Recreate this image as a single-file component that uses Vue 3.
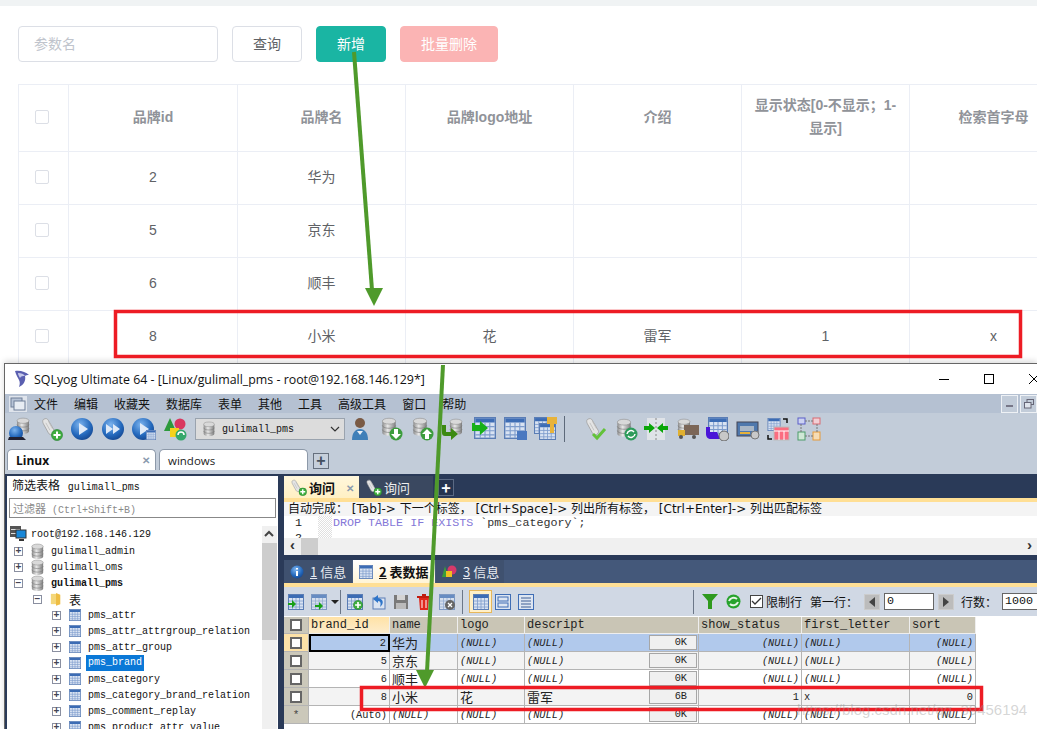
<script setup>
const webCols = ['品牌logo地址', '介绍']
const webRows = [
    { id: 2, name: '华为', logo: '', desc: '', show: '', letter: '' },
    { id: 5, name: '京东', logo: '', desc: '', show: '', letter: '' },
    { id: 6, name: '顺丰', logo: '', desc: '', show: '', letter: '' },
    { id: 8, name: '小米', logo: '花', desc: '雷军', show: '1', letter: 'x' },
]
const menus = ['文件', '编辑', '收藏夹', '数据库', '表单', '其他', '工具', '高级工具', '窗口', '帮助']
const tables = [
    'pms_attr',
    'pms_attr_attrgroup_relation',
    'pms_attr_group',
    'pms_brand',
    'pms_category',
    'pms_category_brand_relation',
    'pms_comment_replay',
    'pms_product_attr_value',
]
const gridHead = ['brand_id', 'name', 'logo', 'descript', 'show_status', 'first_letter', 'sort']
const gridRows = [
    { id: '2', name: '华为', size: '0K', cls: 'selected' },
    { id: '5', name: '京东', size: '0K', cls: 'alt' },
    { id: '6', name: '顺丰', size: '0K', cls: '' },
    { id: '8', name: '小米', logo: '花', desc: '雷军', size: '6B', show: '1', letter: 'x', sort: '0', cls: 'alt' },
    { id: '(Auto)', size: '0K', cls: 'new' },
]
</script>

<template>
    <div class="screen">
        <!-- shared icon parts -->
        <svg class="defs" width="0" height="0" aria-hidden="true">
            <defs>
                <linearGradient id="dbg" x1="0" x2="1" y1="0" y2="0">
                    <stop offset="0" stop-color="#8d8d8d" />
                    <stop offset="0.4" stop-color="#e8e8e8" />
                    <stop offset="1" stop-color="#7c7c7c" />
                </linearGradient>
                <radialGradient id="blueg" cx="0.4" cy="0.3" r="0.8">
                    <stop offset="0" stop-color="#7db4ee" />
                    <stop offset="0.6" stop-color="#2469bd" />
                    <stop offset="1" stop-color="#123f86" />
                </radialGradient>
                <symbol id="db" viewBox="0 0 24 24">
                    <path d="M4 5v14c0 2 3.600 3.500 8 3.500s8-1.500 8-3.500V5z" fill="url(#dbg)" />
                    <ellipse cx="12" cy="5" rx="8" ry="3.500" fill="#d9d9d9" stroke="#8b8b8b" stroke-width=".7" />
                    <path d="M4 10c0 2 3.600 3.500 8 3.500s8-1.500 8-3.500M4 15c0 2 3.600 3.500 8 3.500s8-1.500 8-3.500" fill="none" stroke="#777" stroke-width=".8" />
                </symbol>
                <symbol id="tbl" viewBox="0 0 16 16">
                    <rect x=".5" y=".5" width="15" height="15" fill="#d9e3f2" stroke="#5a7db5" />
                    <rect x="1" y="1" width="14" height="3" fill="#3c6cb4" />
                    <path d="M1 7h14M1 10h14M1 13h14M4.500 4v11M8 4v11M11.500 4v11" stroke="#7d9ccc" stroke-width=".8" />
                </symbol>
                <symbol id="scroll" viewBox="0 0 24 24">
                    <path d="M4 3c3-2 5-1 6 1l7 12c1 2 0 4-2 5-2 1-4 0-5-2L4 8C3 6 3 4 4 3z" fill="#e4e4e4" stroke="#a0a0a0" />
                    <path d="M7 7l5 9M10 5l5 9" stroke="#bdbdbd" />
                </symbol>
                <symbol id="badge-plus" viewBox="0 0 12 12">
                    <circle cx="6" cy="6" r="5.500" fill="#3fae3f" stroke="#1f7a2a" stroke-width=".6" />
                    <path d="M6 2.500v7M2.500 6h7" stroke="#fff" stroke-width="2" />
                </symbol>
            </defs>
        </svg>

        <!-- admin page behind the window -->
        <section class="web">
            <div class="search-bar">
                <div class="web-input">参数名</div>
                <button class="web-btn query">查询</button>
                <button class="web-btn add">新增</button>
                <button class="web-btn del">批量删除</button>
            </div>
            <div class="web-table">
                <div class="web-tr head">
                    <div class="web-td"><span class="web-check"></span></div>
                    <div class="web-td">品牌id</div>
                    <div class="web-td">品牌名</div>
                    <div v-for="c in webCols" :key="c" class="web-td">{{ c }}</div>
                    <div class="web-td">显示状态[0-不显示；1-显示]</div>
                    <div class="web-td">检索首字母</div>
                </div>
                <div v-for="r in webRows" :key="r.id" class="web-tr">
                    <div class="web-td"><span class="web-check"></span></div>
                    <div class="web-td">{{ r.id }}</div>
                    <div class="web-td">{{ r.name }}</div>
                    <div class="web-td">{{ r.logo }}</div>
                    <div class="web-td">{{ r.desc }}</div>
                    <div class="web-td">{{ r.show }}</div>
                    <div class="web-td">{{ r.letter }}</div>
                </div>
            </div>
        </section>

        <!-- SQLyog window -->
        <section class="win">
            <header class="titlebar">
                <svg class="app-logo" width="16" height="18" viewBox="0 0 16 18">
                    <path d="M1 1c5-1 11 1 14 4-2 0-3 0-4 1 1 4-1 9-6 11 1-3 1-5 0-7C4 8 2 5 1 1z" fill="#5a5fb0" />
                    <path d="M4 3c3 0 6 1 7 3-2 0-4 0-5 2C5 6 4 5 4 3z" fill="#c6c9ea" />
                </svg>
                <span class="title-text">SQLyog Ultimate 64 - [Linux/gulimall_pms - root@192.168.146.129*]</span>
                <div class="win-controls">
                    <svg width="10" height="10" viewBox="0 0 10 10"><path d="M0 5.500h10" stroke="#000" /></svg>
                    <svg width="10" height="10" viewBox="0 0 10 10"><rect x=".5" y=".5" width="9" height="9" fill="none" stroke="#000" /></svg>
                    <svg width="10" height="10" viewBox="0 0 10 10"><path d="M0 0l10 10M10 0L0 10" stroke="#000" /></svg>
                </div>
            </header>

            <nav class="menubar">
                <svg class="mdi-icon" width="18" height="16" viewBox="0 0 18 16">
                    <rect x="0" y="0" width="18" height="16" fill="#dfe4ec" />
                    <rect x="2" y="2" width="11" height="9" fill="#b6c3d6" stroke="#6f7f98" />
                    <rect x="5" y="5" width="11" height="9" fill="#e7ecf3" stroke="#6f7f98" />
                </svg>
                <span v-for="m in menus" :key="m" class="menu-item">{{ m }}</span>
                <div class="mdi-btns">
                    <span class="mdi-btn"><i class="mdi-min"></i></span>
                    <span class="mdi-btn"><svg width="10" height="10" viewBox="0 0 10 10"><rect x="3" y=".5" width="6.500" height="5" fill="none" stroke="#667" /><rect x=".5" y="3.500" width="6.500" height="5.500" fill="#dfe4ec" stroke="#667" /></svg></span>
                </div>
            </nav>

            <div class="toolbar">
                <svg class="tool" viewBox="0 0 24 24"><use href="#db" x="6" y="0" width="18" height="18" /><circle cx="8" cy="16" r="7" fill="url(#blueg)" /><path d="M1 20h14l3 3H0z" fill="#223" /></svg>
                <svg class="tool" viewBox="0 0 24 24"><use href="#scroll" x="1" y="0" width="20" height="20" /><use href="#badge-plus" x="12" y="12" width="12" height="12" /></svg>
                <svg class="tool" viewBox="0 0 24 24"><circle cx="12" cy="12" r="11" fill="url(#blueg)" /><path d="M9 6l9 6-9 6z" fill="#dfeaf8" /></svg>
                <svg class="tool" viewBox="0 0 24 24"><circle cx="12" cy="12" r="11" fill="url(#blueg)" /><path d="M5 7l7 5-7 5zM12 7l7 5-7 5z" fill="#dfeaf8" /></svg>
                <svg class="tool" viewBox="0 0 24 24"><circle cx="11" cy="12" r="11" fill="url(#blueg)" /><path d="M8 6l9 6-9 6z" fill="#dfeaf8" /><use href="#tbl" x="14" y="13" width="10" height="10" /></svg>
                <svg class="tool" viewBox="0 0 24 24"><path d="M7 1l6 13H1z" fill="#2d9a3c" /><circle cx="17" cy="7" r="5.500" fill="#d9385f" /><rect x="7" y="11" width="9" height="9" fill="#f5d21c" /><circle cx="18" cy="18" r="5.500" fill="#35a86b" /><path d="M15 18a3 3 0 0 1 6 0" fill="none" stroke="#fff" stroke-width="1.500" /></svg>

                <div class="db-select">
                    <svg width="16" height="18" viewBox="0 0 24 24"><use href="#db" /></svg>
                    <span>gulimall_pms</span>
                    <svg class="db-caret" width="10" height="6" viewBox="0 0 10 6"><path d="M1 1l4 4 4-4" fill="none" stroke="#333" stroke-width="1.200" /></svg>
                </div>

                <svg class="tool" viewBox="0 0 24 24"><circle cx="12" cy="6" r="5" fill="#7a5a44" /><path d="M4 23c0-7 3-11 8-11s8 4 8 11z" fill="#3f7fb8" /><path d="M9 14l3 4 3-4" fill="#e8eef5" /></svg>
                <svg class="tool" viewBox="0 0 24 24"><use href="#db" x="0" y="0" width="20" height="20" /><circle cx="17" cy="17" r="6.500" fill="#3c9c3c" /><path d="M15 12h4v5h3l-5 5-5-5h3z" fill="#fff" /></svg>
                <svg class="tool" viewBox="0 0 24 24"><use href="#db" x="0" y="0" width="20" height="20" /><circle cx="17" cy="17" r="6.500" fill="#3c9c3c" /><path d="M15 22h4v-5h3l-5-5-5 5h3z" fill="#fff" /></svg>
                <svg class="tool" viewBox="0 0 24 24"><use href="#db" x="6" y="0" width="18" height="20" /><path d="M1 8v8c0 2 1 3 3 3h6v4l7-6-7-6v4H5V8z" fill="#3d8a12" /></svg>
                <svg class="tool" viewBox="0 0 24 24"><use href="#tbl" x="2" y="0" width="22" height="22" /><path d="M0 6v8h8v4l8-7-8-7v4H3V6z" fill="#18b018" /></svg>
                <svg class="tool" viewBox="0 0 24 24"><use href="#tbl" x="1" y="0" width="22" height="22" /><rect x="14" y="14" width="10" height="9" fill="#4a78c0" /></svg>
                <svg class="tool" viewBox="0 0 24 24"><use href="#tbl" x="0" y="0" width="17" height="17" /><use href="#tbl" x="5" y="6" width="17" height="17" /><path d="M13 0h10v7h-3v9h-4V7h-3z" fill="#e8b33a" /></svg>
                <i class="tool-sep"></i>
                <svg class="tool tool-b" viewBox="0 0 24 24"><use href="#scroll" x="1" y="0" width="20" height="20" /><path d="M10 17l4 4 8-9" fill="none" stroke="#63c23a" stroke-width="3" /></svg>
                <svg class="tool tool-b" viewBox="0 0 24 24"><use href="#db" x="0" y="1" width="20" height="20" /><circle cx="17" cy="17" r="6.500" fill="#2e9c5c" /><path d="M13 17a4 4 0 0 1 7-2M21 17a4 4 0 0 1-7 2" fill="none" stroke="#fff" stroke-width="1.500" /></svg>
                <svg class="tool tool-b" viewBox="0 0 24 24"><rect x="3" y="1" width="18" height="22" fill="#dfe3e8" /><path d="M12 1v22" stroke="#888" stroke-dasharray="2 2" /><path d="M0 9h5V6l6 5-6 5v-3H0zM24 9h-5V6l-6 5 6 5v-3h5z" fill="#09a609" /></svg>
                <svg class="tool tool-b" viewBox="0 0 24 24"><use href="#db" x="0" y="0" width="18" height="20" /><rect x="9" y="8" width="15" height="10" fill="#7b6658" /><rect x="3" y="13" width="7" height="6" fill="#e0b030" /><circle cx="6" cy="20" r="2" fill="#555" /><circle cx="19" cy="20" r="2" fill="#555" /></svg>
                <svg class="tool tool-b" viewBox="0 0 24 24"><use href="#tbl" x="2" y="0" width="22" height="20" /><path d="M1 10v7c0 3 2 5 5 5h9l-3-7H5v-5z" fill="#4a16d8" /><circle cx="19" cy="19" r="5" fill="#c8c8c8" stroke="#666" /></svg>
                <svg class="tool tool-b" viewBox="0 0 24 24"><rect x="1" y="5" width="21" height="14" fill="#4f78ad" stroke="#445" /><rect x="4" y="9" width="14" height="5" fill="#a9b6c6" /><rect x="4" y="15" width="10" height="2" fill="#e6b13a" /><circle cx="19" cy="18" r="4" fill="#c9c9c9" stroke="#777" /></svg>
                <svg class="tool tool-b" viewBox="0 0 24 24"><use href="#tbl" x="1" y="1" width="14" height="13" /><path d="M17 2h4v4M2 18v4h4" fill="none" stroke="#111" stroke-width="1.500" /><rect x="8" y="10" width="15" height="13" fill="#fb6d80" stroke="#bbb" /><path d="M8 14h15M13 14v9M18 14v9" stroke="#fff" /></svg>
                <svg class="tool tool-b" viewBox="0 0 24 24"><rect x="1" y="1" width="7" height="6" fill="#cdd3f2" stroke="#5a5ec8" /><rect x="16" y="1" width="7" height="6" fill="#f2cfd5" stroke="#d86a72" /><rect x="1" y="15" width="7" height="8" fill="#cfe8d6" stroke="#4c9c6a" /><rect x="16" y="15" width="7" height="8" fill="#f6dcb5" stroke="#e59a3a" /><path d="M8 4h8M20 7v8M8 19h8M4 7v8" stroke="#777" stroke-dasharray="2 1" /></svg>
            </div>

            <div class="conn-tabs">
                <div class="conn-tab active"><b>Linux</b><span class="tab-x">✕</span></div>
                <div class="conn-tab"><span>windows</span></div>
                <div class="conn-plus">+</div>
            </div>

            <div class="workspace">
                <aside class="side">
                    <div class="side-title">筛选表格 <span>gulimall_pms</span></div>
                    <div class="side-filter"><span>过滤器</span> (Ctrl+Shift+B)</div>
                    <div class="tree-wrap">
                        <div class="tree">
                            <div class="node root">
                                <svg width="17" height="16" viewBox="0 0 17 16"><rect x="0" y="0" width="11" height="11" fill="#555" /><rect x="1" y="3" width="9" height="1" fill="#ddd" /><rect x="1" y="7" width="9" height="1" fill="#ddd" /><rect x="6" y="4" width="10" height="8" fill="#1787d8" stroke="#333" /><path d="M9 14h5" stroke="#333" stroke-width="2" /></svg>
                                <span>root@192.168.146.129</span>
                            </div>
                            <div class="node lv1"><i class="exp">+</i><svg class="n-icon db-i" viewBox="0 0 24 24"><use href="#db" /></svg><span>gulimall_admin</span></div>
                            <div class="node lv1"><i class="exp">+</i><svg class="n-icon db-i" viewBox="0 0 24 24"><use href="#db" /></svg><span>gulimall_oms</span></div>
                            <div class="node lv1 strong"><i class="exp">−</i><svg class="n-icon db-i" viewBox="0 0 24 24"><use href="#db" /></svg><span>gulimall_pms</span></div>
                            <div class="node lv2"><i class="exp">−</i><svg class="n-icon" viewBox="0 0 14 16"><path d="M1 2h6v12H1z" fill="#f4d77a" /><path d="M7 1l5 2v11l-5 2z" fill="#eebd43" /></svg><span class="cjk">表</span></div>
                            <div v-for="t in tables" :key="t" class="node lv3">
                                <i class="exp">+</i>
                                <svg class="n-icon" viewBox="0 0 16 16"><use href="#tbl" /></svg>
                                <span :class="{ hot: t === 'pms_brand' }">{{ t }}</span>
                            </div>
                        </div>
                        <div class="side-scroll">
                            <svg width="14" height="16" viewBox="0 0 14 16"><path d="M3 10l4-4 4 4" fill="none" stroke="#444" stroke-width="2" /></svg>
                            <i class="side-thumb"></i>
                        </div>
                    </div>
                </aside>

                <main class="main">
                    <div class="q-tabs">
                        <div class="q-tab active">
                            <svg width="17" height="17" viewBox="0 0 24 24"><use href="#scroll" width="20" height="20" /><use href="#badge-plus" x="12" y="12" width="12" height="12" /></svg>
                            <b>询问</b><span class="tab-x">✕</span>
                        </div>
                        <div class="q-tab">
                            <svg width="17" height="17" viewBox="0 0 24 24"><use href="#scroll" width="20" height="20" /><use href="#badge-plus" x="12" y="12" width="12" height="12" /></svg>
                            <span>询问</span>
                        </div>
                        <div class="q-plus">+</div>
                    </div>
                    <div class="autocomplete">自动完成： [Tab]-&gt; 下一个标签， [Ctrl+Space]-&gt; 列出所有标签， [Ctrl+Enter]-&gt; 列出匹配标签</div>
                    <div class="editor">
                        <div class="gutter"><span>1</span><span>2</span></div>
                        <i class="hatch"></i>
                        <div class="code"><em>DROP TABLE IF EXISTS</em> `pms_category`;</div>
                    </div>
                    <div class="h-scroll">
                        <i class="h-arrow">‹</i>
                        <i class="h-thumb"></i>
                        <i class="h-arrow end">›</i>
                    </div>

                    <div class="r-tabs">
                        <div class="r-tab">
                            <svg width="14" height="14" viewBox="0 0 14 14"><circle cx="7" cy="7" r="6.500" fill="url(#blueg)" /><path d="M7 3v1.500M7 6v5" stroke="#fff" stroke-width="2" /></svg>
                            <span><u>1</u> 信息</span>
                        </div>
                        <div class="r-tab active">
                            <svg width="14" height="14" viewBox="0 0 16 16"><use href="#tbl" /></svg>
                            <b><u>2</u> 表数据</b>
                        </div>
                        <div class="r-tab">
                            <svg width="15" height="14" viewBox="0 0 15 14"><path d="M3 1l3 11H0z" fill="#3a9c3a" /><circle cx="10" cy="5" r="4.500" fill="#d63a6a" /><rect x="4" y="6" width="6" height="6" fill="#f0c020" /></svg>
                            <span><u>3</u> 信息</span>
                        </div>
                    </div>

                    <div class="r-toolbar">
                        <svg class="rt" viewBox="0 0 16 16"><use href="#tbl" /><path d="M0 9h4V6l4 4-4 4v-3H0z" fill="#18a018" /></svg>
                        <svg class="rt" viewBox="0 0 16 16"><use href="#tbl" opacity=".7" /><path d="M4 11h4V8l4 4-4 4v-3H4z" fill="#18a018" /></svg>
                        <i class="rt-caret"></i>
                        <i class="rt-sep"></i>
                        <svg class="rt" viewBox="0 0 16 16"><use href="#tbl" /><use href="#badge-plus" x="6" y="6" width="10" height="10" /></svg>
                        <svg class="rt" viewBox="0 0 16 16"><rect x="3" y="4" width="12" height="11" fill="#dbe4f1" stroke="#5a7db5" /><path d="M8 1L3 5l5 4V7c3 0 3 3 2 6 4-3 4-8-2-9z" fill="#2f75c9" /></svg>
                        <svg class="rt" viewBox="0 0 16 16"><rect x="1" y="1" width="14" height="14" fill="#7a7a7a" /><rect x="4" y="1" width="8" height="5" fill="#d4d4d4" /><rect x="3" y="9" width="10" height="6" fill="#bbb" /></svg>
                        <svg class="rt" viewBox="0 0 16 16"><path d="M3 4h10l-1 12H4z" fill="#e0281c" /><path d="M1 3h14M6 1h4" stroke="#c01c10" stroke-width="2" /><path d="M6 6v8M10 6v8" stroke="#fff" /></svg>
                        <svg class="rt" viewBox="0 0 16 16"><use href="#tbl" opacity=".7" /><circle cx="11" cy="11" r="5" fill="#666" /><path d="M9 9l4 4M13 9l-4 4" stroke="#fff" stroke-width="1.300" /></svg>
                        <i class="rt-sep"></i>
                        <div class="rt-on"><svg class="rt" viewBox="0 0 16 16"><use href="#tbl" /></svg></div>
                        <svg class="rt" viewBox="0 0 16 16"><rect x=".5" y=".5" width="15" height="15" fill="#dde5f1" stroke="#3f6db5" /><rect x="3" y="3" width="10" height="4" fill="none" stroke="#3f6db5" /><rect x="3" y="9" width="10" height="4" fill="none" stroke="#3f6db5" /></svg>
                        <svg class="rt" viewBox="0 0 16 16"><rect x=".5" y=".5" width="15" height="15" fill="#dde5f1" stroke="#3f6db5" /><path d="M3 4h10M3 7h10M3 10h10M3 13h10" stroke="#3f5f95" /></svg>

                        <div class="rt-right">
                            <i class="rt-sep"></i>
                            <svg class="rt-filter" width="16" height="15" viewBox="0 0 16 15"><path d="M0 0h16L10 7v8H6V7z" fill="#2f9a1e" /></svg>
                            <svg class="rt-refresh" width="15" height="15" viewBox="0 0 15 15"><circle cx="7.500" cy="7.500" r="7" fill="#27a32c" /><path d="M3 7a5 5 0 0 1 8-2M12 8a5 5 0 0 1-8 2" fill="none" stroke="#e6f5e6" stroke-width="2" /></svg>
                            <label class="limit"><i class="limit-box"><svg width="11" height="9" viewBox="0 0 11 9"><path d="M1 4l3 3 6-6" fill="none" stroke="#333" stroke-width="1.300" /></svg></i>限制行</label>
                            <span class="first-row">第一行：</span>
                            <i class="pager-btn"><b class="tri-l"></b></i>
                            <span class="pager-input first">0</span>
                            <i class="pager-btn"><b class="tri-r"></b></i>
                            <span class="row-count">行数：</span>
                            <span class="pager-input count">1000</span>
                        </div>
                    </div>

                    <div class="grid">
                        <div class="g-cell g-sel g-corner"><i class="g-box"></i></div>
                        <div v-for="(h, i) in gridHead" :key="h" class="g-cell g-head" :class="{ sorted: i === 0 }">{{ h }}</div>

                        <template v-for="(r, i) in gridRows" :key="r.id">
                            <div class="g-cell g-sel" :class="{ 'sel-on': i === 0 }">
                                <i v-if="r.cls !== 'new'" class="g-box"></i>
                                <span v-else class="star">*</span>
                            </div>
                            <div class="g-cell num" :class="[r.cls, { focus: i === 0 }]">{{ r.id }}</div>
                            <div class="g-cell cjk-cell" :class="r.cls">
                                <span v-if="r.name">{{ r.name }}</span><em v-else>(NULL)</em>
                            </div>
                            <div class="g-cell cjk-cell" :class="r.cls">
                                <span v-if="r.logo">{{ r.logo }}</span><em v-else>(NULL)</em>
                            </div>
                            <div class="g-cell cjk-cell with-size" :class="r.cls">
                                <span v-if="r.desc">{{ r.desc }}</span><em v-else>(NULL)</em>
                                <span class="size">{{ r.size }}</span>
                            </div>
                            <div class="g-cell num" :class="r.cls">
                                <span v-if="r.show">{{ r.show }}</span><em v-else>(NULL)</em>
                            </div>
                            <div class="g-cell" :class="r.cls">
                                <span v-if="r.letter">{{ r.letter }}</span><em v-else>(NULL)</em>
                            </div>
                            <div class="g-cell num" :class="r.cls">
                                <span v-if="r.sort">{{ r.sort }}</span><em v-else>(NULL)</em>
                            </div>
                        </template>
                    </div>
                </main>
            </div>
        </section>

        <!-- annotations drawn over the screenshot -->
        <svg class="marks" width="1037" height="729" viewBox="0 0 1037 729">
            <path d="M354 52L372 290" stroke="#4f9a2b" stroke-width="4" fill="none" />
            <path d="M365 288h18l-9 18z" fill="#4f9a2b" />
            <path d="M443 365L427 672" stroke="#4f9a2b" stroke-width="4" fill="none" />
            <path d="M416 670h18l-9 18z" fill="#4f9a2b" />
            <rect x="115.500" y="311.500" width="905" height="45" fill="none" stroke="#ed1c24" stroke-width="3.500" />
            <rect x="361.500" y="687.500" width="620" height="22" fill="none" stroke="#ed1c24" stroke-width="3.500" />
        </svg>
        <div class="watermark">https://blog.csdn.net/qq_39456194</div>
    </div>
</template>

<style>
    html,
    body {
        margin: 0;
        background: #fff;
        overflow: hidden;
    }
</style>

<style scoped>
    .screen {
        position: relative;
        width: 1037px;
        height: 729px;
        overflow: hidden;
        background: #fff;
        font-family: 'Liberation Sans', 'Noto Sans CJK SC', sans-serif;
    }
    .defs {
        position: absolute;
    }

    /* admin page */
    .web {
        height: 363px;
        box-sizing: border-box;
        border-top: 6px solid #f0f3f4;
        padding: 20px 0 0 18px;
        overflow: hidden;
    }
    .search-bar {
        display: flex;
        gap: 14px;
        height: 36px;
        margin-bottom: 22px;
    }
    .web-input {
        width: 200px;
        box-sizing: border-box;
        border: 1px solid #dcdfe6;
        border-radius: 4px;
        padding-left: 15px;
        font-size: 14px;
        line-height: 34px;
        color: #c0c4cc;
    }
    .web-btn {
        box-sizing: border-box;
        width: 70px;
        border-radius: 4px;
        border: 1px solid #dcdfe6;
        background: #fff;
        padding: 0 0 2px;
        font: inherit;
        font-size: 14px;
        color: #606266;
    }
    .web-btn.add {
        background: #1ab5a3;
        border-color: #1ab5a3;
        color: #fff;
    }
    .web-btn.del {
        width: 98px;
        background: #fbb4b4;
        border-color: #fbb4b4;
        color: #fff;
    }
    .web-table {
        width: 1060px;
        border-top: 1px solid #ebeef5;
        border-left: 1px solid #ebeef5;
    }
    .web-tr {
        display: grid;
        grid-template-columns: 50px 169px 168px 168px 168px 168px 168px;
        height: 53px;
    }
    .web-tr.head {
        height: 67px;
        font-weight: 700;
        color: #909399;
    }
    .web-td {
        display: flex;
        align-items: center;
        justify-content: center;
        box-sizing: border-box;
        padding: 0 10px 2px;
        border-right: 1px solid #ebeef5;
        border-bottom: 1px solid #ebeef5;
        font-size: 14px;
        line-height: 23px;
        text-align: center;
        color: #606266;
    }
    .head .web-td {
        color: #909399;
    }
    .web-check {
        width: 14px;
        height: 14px;
        margin-right: 4px;
        flex: none;
        box-sizing: border-box;
        border: 1px solid #dcdfe6;
        border-radius: 2px;
    }

    /* window chrome */
    .win {
        height: 366px;
        margin-left: 4px;
        border-top: 1px solid #666;
        border-left: 1px solid #666;
        box-sizing: border-box;
        box-shadow: 0 -2px 6px rgba(0, 0, 0, 0.15);
        background: #2a3a58;
        display: flex;
        flex-direction: column;
        position: relative;
    }
    .titlebar {
        flex: none;
        height: 30px;
        display: flex;
        align-items: center;
        background: #fff;
        padding-left: 9px;
    }
    .app-logo {
        margin-right: 4px;
    }
    .title-text {
        font-family: 'Open Sans', 'Noto Sans', sans-serif;
        font-size: 12.400px;
        color: #111;
        white-space: nowrap;
    }
    .win-controls {
        display: flex;
        gap: 35px;
        margin-left: auto;
        margin-right: -2px;
    }
    .menubar {
        flex: none;
        height: 19px;
        display: flex;
        align-items: center;
        gap: 16px;
        background: #b5c1d2;
        padding-left: 4px;
        font-size: 12px;
        color: #111;
    }
    .mdi-icon {
        margin-right: -9px;
    }
    .mdi-btns {
        margin-left: auto;
        display: flex;
        gap: 2px;
    }
    .mdi-btn {
        box-sizing: border-box;
        width: 17px;
        height: 18px;
        display: flex;
        align-items: center;
        justify-content: center;
        background: #c2ccd9;
        border: 1px solid #eef1f5;
    }
    .mdi-min {
        width: 7px;
        height: 2px;
        margin-top: 4px;
        background: #778;
    }
    .toolbar {
        flex: none;
        height: 32px;
        display: flex;
        align-items: center;
        gap: 7px;
        background: #c2ccd9;
        padding-left: 3px;
    }
    .tool {
        flex: none;
        width: 24px;
        height: 24px;
    }
    .tool-b {
        margin-right: -0.5px;
    }
    .db-select {
        flex: none;
        box-sizing: border-box;
        width: 150px;
        height: 22px;
        margin: 0 -4px 0 1px;
        display: flex;
        align-items: center;
        gap: 5px;
        padding-left: 5px;
        border: 1px solid #9aa3ae;
        background: #dcdcdc;
        font-family: 'Liberation Mono', monospace;
        font-size: 10px;
        color: #111;
    }
    .db-caret {
        margin-left: auto;
        margin-right: 4px;
    }
    .tool-sep {
        flex: none;
        width: 1px;
        height: 26px;
        margin: 0 11px 0 -1px;
        background: #5e6a7a;
    }
    .conn-tabs {
        flex: none;
        height: 29px;
        box-sizing: border-box;
        display: flex;
        align-items: flex-end;
        gap: 3px;
        padding-left: 2px;
        background: #c2ccd9;
    }
    .conn-tab {
        box-sizing: border-box;
        width: 149px;
        height: 21px;
        margin-bottom: 4px;
        display: flex;
        align-items: center;
        padding-left: 8px;
        background: #fff;
        border: 1px solid #8d99a9;
        border-bottom: none;
        border-radius: 5px 5px 0 0;
        font-family: 'Open Sans', 'Noto Sans', sans-serif;
        font-size: 11.500px;
        color: #222;
    }
    .conn-tab.active b {
        font-size: 12px;
        font-weight: 700;
        color: #111;
    }
    .tab-x {
        margin-left: auto;
        margin-right: 5px;
        font-size: 10px;
        font-weight: 700;
        color: #8a9aae;
    }
    .conn-plus {
        box-sizing: border-box;
        width: 16px;
        height: 16px;
        margin: 0 0 5px 2px;
        border: 1px solid #66707e;
        background: #c6cfdb;
        font-size: 16px;
        font-weight: 700;
        line-height: 13px;
        text-align: center;
        color: #44505f;
    }
    .workspace {
        flex: 1;
        min-height: 0;
        display: flex;
        gap: 6px;
        padding: 2px 0 0 2px;
    }

    /* object browser */
    .side {
        flex: none;
        width: 271px;
        display: flex;
        flex-direction: column;
        background: #fff;
        font-family: 'Liberation Mono', 'Noto Sans CJK SC', monospace;
        color: #111;
        overflow: hidden;
    }
    .side-title {
        flex: none;
        height: 22px;
        padding: 1px 0 0 5px;
        box-sizing: border-box;
        font-family: 'Noto Sans CJK SC', sans-serif;
        font-size: 12px;
        line-height: 16px;
    }
    .side-title span {
        margin-left: 5px;
        font-family: 'Liberation Mono', monospace;
        font-size: 10px;
    }
    .side-filter {
        flex: none;
        box-sizing: border-box;
        height: 20px;
        margin: 0 2px;
        padding-left: 3px;
        border: 1px solid #888;
        font-size: 10px;
        line-height: 18px;
        color: #8a8a8a;
        white-space: nowrap;
    }
    .side-filter span {
        font-family: 'Noto Sans CJK SC', sans-serif;
        font-size: 11px;
    }
    .tree-wrap {
        flex: 1;
        min-height: 0;
        display: flex;
        margin-top: 8px;
    }
    .tree {
        flex: 1;
        min-width: 0;
    }
    .node {
        height: 16px;
        display: flex;
        align-items: center;
        font-size: 10px;
        white-space: nowrap;
    }
    .node.root {
        padding-left: 3px;
        gap: 4px;
    }
    .node.root + .node {
        margin-top: 1px;
    }
    .lv1 {
        padding-left: 7px;
    }
    .lv2 {
        padding-left: 26px;
    }
    .lv3 {
        padding-left: 45px;
    }
    .strong {
        font-weight: 700;
    }
    .exp {
        flex: none;
        box-sizing: border-box;
        width: 9px;
        height: 9px;
        border: 1px solid #8a8fa0;
        font-family: 'Liberation Sans', sans-serif;
        font-size: 10px;
        font-style: normal;
        font-weight: 700;
        line-height: 6px;
        text-align: center;
        color: #445;
    }
    .n-icon {
        flex: none;
        width: 12px;
        height: 14px;
        margin: 0 7px 0 8px;
    }
    .db-i {
        width: 17px;
        height: 17px;
        margin: 0 5px 0 6px;
    }
    .cjk {
        font-family: 'Noto Sans CJK SC', sans-serif;
        font-size: 12px;
    }
    .hot {
        margin-left: -2px;
        padding: 0 2px;
        background: #0a78d7;
        color: #fff;
        line-height: 16px;
    }
    .side-scroll {
        flex: none;
        width: 15px;
        margin-right: 1px;
        background: #f0f0f0;
        position: relative;
    }
    .side-scroll svg {
        display: block;
    }
    .side-thumb {
        display: block;
        height: 97px;
        background: #cdcdcd;
        margin-top: 1px;
    }

    /* right pane */
    .main {
        flex: 1;
        min-width: 0;
        display: flex;
        flex-direction: column;
        background: #fff;
        overflow: hidden;
    }
    .q-tabs {
        flex: none;
        height: 26px;
        box-sizing: border-box;
        display: flex;
        border-bottom: 4px solid #ffdf95;
        background: #2a3a58;
        font-family: 'Noto Sans CJK SC', sans-serif;
        font-size: 13px;
    }
    .q-tab {
        box-sizing: border-box;
        width: 74px;
        display: flex;
        align-items: center;
        gap: 2px;
        padding-left: 6px;
        background: #3a4860;
        color: #eee;
    }
    .q-tab.active {
        width: 75px;
        background: linear-gradient(#fff7dc, #fff0c4);
        color: #111;
    }
    .q-plus {
        box-sizing: border-box;
        width: 16px;
        height: 17px;
        margin: 3px 0 0 5px;
        background: #26344f;
        border: 1px solid #5b6a84;
        font-size: 16px;
        font-weight: 700;
        line-height: 14px;
        text-align: center;
        color: #fff;
    }
    .autocomplete {
        flex: none;
        height: 14px;
        padding-left: 4px;
        background: #f4f4f4;
        font-family: 'DejaVu Sans', 'Noto Sans CJK SC', sans-serif;
        font-size: 12px;
        line-height: 14px;
        color: #111;
        white-space: nowrap;
    }
    .editor {
        flex: none;
        height: 22px;
        display: flex;
        background: #fff;
        overflow: hidden;
        font-family: 'Liberation Mono', monospace;
        font-size: 11.700px;
        line-height: 15px;
    }
    .gutter {
        flex: none;
        width: 34px;
        padding-left: 11px;
        box-sizing: border-box;
        color: #222;
    }
    .gutter span {
        display: block;
    }
    .hatch {
        flex: none;
        width: 14px;
        background: repeating-conic-gradient(#e0e0e0 0 25%, #fff 0 50%) 0 0 / 2px 2px;
    }
    .code {
        padding-left: 1px;
        color: #333;
    }
    .code em {
        font-style: normal;
        color: #8478d8;
    }
    .h-scroll {
        flex: none;
        height: 17px;
        display: flex;
        background: #f0f0f0;
    }
    .h-arrow {
        width: 17px;
        font: 700 15px/14px 'Liberation Sans', sans-serif;
        text-align: center;
        color: #333;
    }
    .h-arrow.end {
        margin-left: auto;
        margin-right: -1px;
    }
    .h-thumb {
        width: 17px;
        background: #cdcdcd;
    }
    .r-tabs {
        flex: none;
        height: 32px;
        box-sizing: border-box;
        display: flex;
        gap: 1px;
        background: linear-gradient(#2a3a58 5px, #44587a 5px);
        border-bottom: 4px solid #ffdf95;
        font-family: 'Noto Sans CJK SC', sans-serif;
        font-size: 13px;
    }
    .r-tab {
        box-sizing: border-box;
        width: 68px;
        margin-top: 5px;
        display: flex;
        align-items: center;
        gap: 6px;
        padding-left: 6px;
        background: #3f516f;
        color: #e8ecf2;
    }
    .r-tab.active {
        width: 82px;
        background: linear-gradient(#fff, #fff4d6);
        color: #111;
    }
    .r-toolbar {
        flex: none;
        height: 29px;
        display: flex;
        align-items: center;
        gap: 7px;
        padding-left: 4px;
        background: #d0d8e4;
        font-family: 'Noto Sans CJK SC', sans-serif;
        font-size: 12px;
        color: #111;
        white-space: nowrap;
    }
    .rt {
        flex: none;
        width: 16px;
        height: 16px;
        display: block;
    }
    .rt-caret {
        width: 0;
        height: 0;
        margin: 0 -6px 0 -3px;
        border: 4px solid transparent;
        border-top: 4px solid #222;
        border-bottom: none;
    }
    .rt-sep {
        flex: none;
        width: 1px;
        height: 24px;
        margin-right: -1px;
        background: #6c7788;
    }
    .rt-on {
        box-sizing: border-box;
        width: 23px;
        height: 23px;
        margin-right: -4px;
        padding: 2.500px;
        background: #fff0c8;
        border: 1px solid #e7b75a;
    }
    .rt-right {
        flex: none;
        display: flex;
        align-items: center;
        margin-left: 152px;
    }
    .rt-filter {
        margin-left: 9px;
    }
    .rt-refresh {
        margin-left: 8px;
    }
    .limit {
        display: flex;
        align-items: center;
        gap: 3px;
        margin-left: 9px;
    }
    .limit-box {
        box-sizing: border-box;
        width: 13px;
        height: 13px;
        display: flex;
        align-items: center;
        justify-content: center;
        border: 1px solid #444;
        background: #fff;
    }
    .first-row {
        margin-left: 8px;
        width: 54px;
    }
    .pager-btn {
        box-sizing: border-box;
        width: 16px;
        height: 16px;
        display: flex;
        align-items: center;
        justify-content: center;
        background: #bcbcbc;
        border: 1px solid #ccc;
    }
    .tri-l,
    .tri-r {
        width: 0;
        height: 0;
        border: 5px solid transparent;
    }
    .tri-l {
        border-right: 6px solid #444;
        border-left: none;
    }
    .tri-r {
        border-left: 6px solid #444;
        border-right: none;
    }
    .pager-input {
        box-sizing: border-box;
        height: 17px;
        padding-left: 2px;
        border: 1px solid #666;
        background: #fff;
        font-family: 'Liberation Mono', monospace;
        font-size: 11.700px;
        line-height: 15px;
    }
    .pager-input.first {
        width: 50px;
        margin: 0 4px;
    }
    .pager-input.count {
        width: 60px;
    }
    .row-count {
        width: 41px;
        margin-left: 7px;
    }

    /* result grid */
    .grid {
        flex: none;
        width: 692px;
        margin-top: 1px;
        display: grid;
        grid-template-columns: 25px 81px 68px 67px 174px 103px 108px 66px;
        grid-template-rows: 17px;
        grid-auto-rows: 18px;
        font-family: 'Liberation Mono', 'Noto Sans CJK SC', monospace;
        font-size: 10.300px;
        color: #222;
    }
    .g-cell {
        box-sizing: border-box;
        display: flex;
        align-items: center;
        padding: 0 2px;
        border-right: 1px solid #b4b4b4;
        border-bottom: 1px solid #b4b4b4;
        background: #fff;
        white-space: nowrap;
        overflow: hidden;
    }
    .g-cell em {
        font-family: 'Liberation Mono', monospace;
    }
    .g-head {
        background: #c9c5b5;
        border-right: 1px solid #eee;
        border-bottom: 1px solid #eee;
        font-size: 12px;
        color: #222;
    }
    .g-head.sorted {
        background: linear-gradient(#ffe2a6, #fdeccb);
    }
    .g-sel {
        justify-content: center;
        background: #cbc8ba;
        padding: 0;
    }
    .g-sel.sel-on {
        background: #fde2a8;
    }
    .g-box {
        box-sizing: border-box;
        width: 12px;
        height: 12px;
        border: 2px solid #666;
        background: #fff;
    }
    .star {
        font-size: 11px;
        color: #444;
    }
    .num {
        justify-content: flex-end;
    }
    .selected {
        background: #b1c9ec;
    }
    .alt {
        background: #f3f3f3;
    }
    .focus {
        border: 2px solid #000;
    }
    .cjk-cell > span {
        font-family: 'Noto Sans CJK SC', sans-serif;
        font-size: 13px;
    }
    .with-size {
        padding-right: 1px;
    }
    .cjk-cell > .size {
        box-sizing: border-box;
        width: 48px;
        height: 15px;
        margin-left: auto;
        padding-right: 9px;
        border: 1px solid #a6a6a6;
        background: #f0f0f0;
        font-family: 'Liberation Mono', monospace;
        font-size: 10.300px;
        line-height: 13px;
        text-align: right;
    }

    /* annotations */
    .marks {
        position: absolute;
        left: 0;
        top: 0;
        pointer-events: none;
    }
    .watermark {
        position: absolute;
        left: 797px;
        top: 701px;
        font-size: 15px;
        line-height: 18px;
        color: rgba(150, 150, 150, 0.4);
        white-space: nowrap;
    }
</style>
